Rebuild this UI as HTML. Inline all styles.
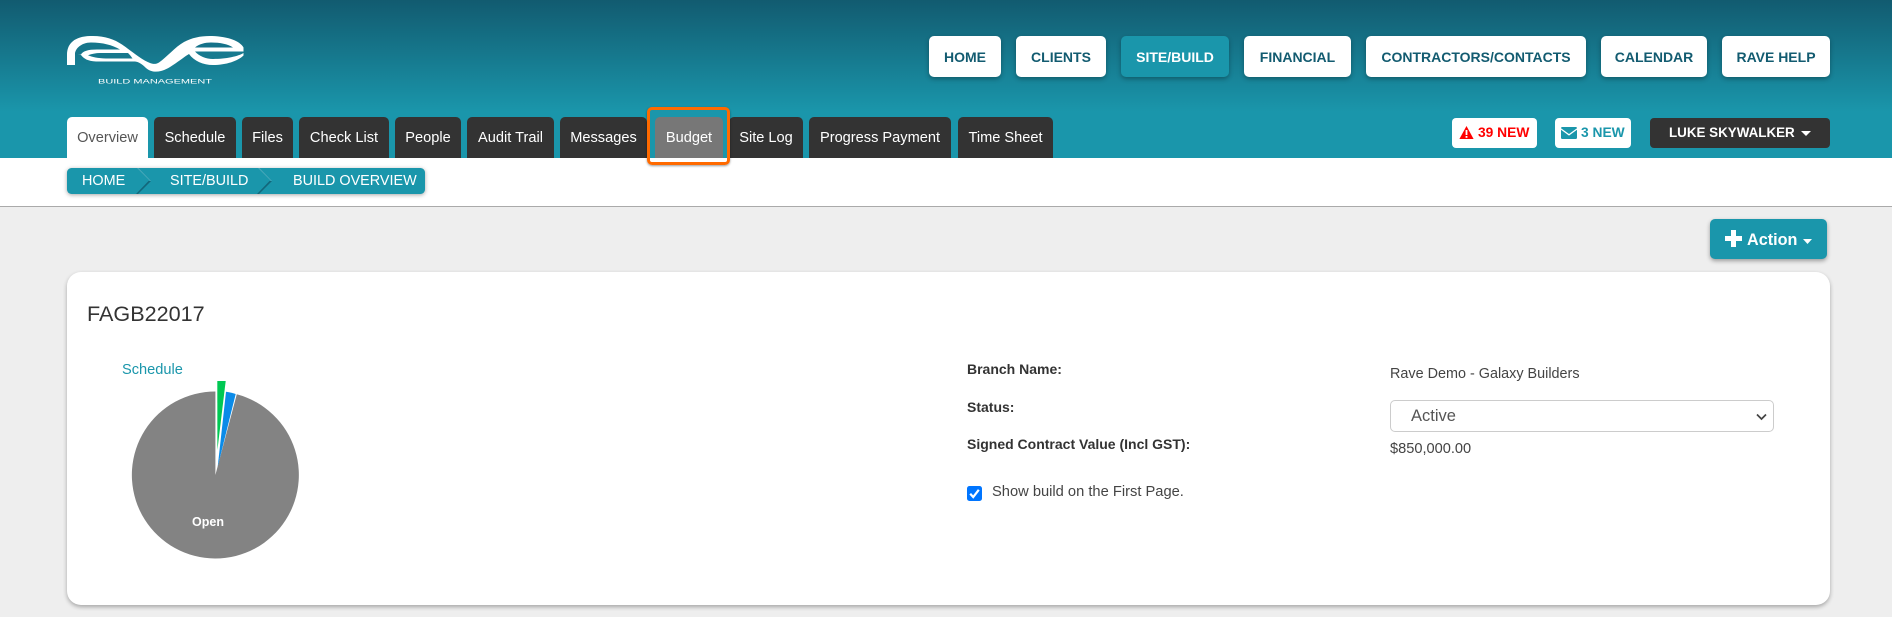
<!DOCTYPE html>
<html><head><meta charset="utf-8"><title>Build Overview</title>
<style>
html,body{margin:0;padding:0}
body{width:1892px;height:617px;position:relative;overflow:hidden;background:#eee;font-family:"Liberation Sans",sans-serif;color:#333}
div,span{box-sizing:border-box}
.a{position:absolute}
.c{position:absolute;display:flex;align-items:center;justify-content:center;white-space:nowrap}
#hd{left:0;top:0;width:1892px;height:158px;background:linear-gradient(#125b70 0,#1a96ab 112px,#1a96ab 158px)}
#wh{left:0;top:158px;width:1892px;height:48px;background:#fff}
#ln{left:0;top:206px;width:1892px;height:1px;background:#aaa}
.n{top:36px;height:41px;background:#fff;border-radius:5px;color:#125b70;font-weight:bold;font-size:14px;box-shadow:0 2px 5px rgba(0,0,0,.3)}
.t{top:117px;height:41px;background:#333;color:#fff;font-size:14.6px;border-radius:5px 5px 0 0}
.l{left:967px;font-size:14px;font-weight:bold;color:#333;white-space:nowrap}
.v{left:1390px;font-size:14.4px;color:#444;white-space:nowrap}
</style></head><body>
<div class="a" id="hd"></div>
<div class="a" id="wh"></div>
<div class="a" id="ln"></div>

<svg class="a" style="left:0;top:0" width="300" height="100" viewBox="0 0 300 100">
<path fill="#fff" d="M67 65L67 55C67 43 75 36.5 90 36C104 35.5 114 39 122 44.5C130 50 142 60 150 63C153 64.3 156 64.3 159 62.5C167 57 175 47 184 42C192 37.5 202 35.7 212 36C228 36.5 240 41 243.5 47.5L243.5 55.5C238 61 226 65 213 65C203 65 194 61 189 54C182 58 170 69 161 71C155 72.5 150 71.5 146 68C142 64 139 62 135 61.5L96 61.5C88 61 84 59 81 55L75 53L75 65Z"/>
<path fill="#16768b" d="M75 54C75 49 81 42.5 91 42.5C103 42.5 112 45 120 49.5L97 49.5C88 49.5 83 51 81 54.5Z"/>
<path fill="#17788d" d="M88 55.2C92 53.8 96 53 100 53L128 53C130 54.8 131 56.5 132.5 58.5L106 58.5C98 58.2 92 57 88 55.2Z"/>
<path fill="#15728a" d="M195 47.5C199 44 205 42.5 211 42.5C220 42.5 228 44 233 47.5Z"/>
<path fill="#177a8f" d="M195 51.5L244 51.5L244 52.8C238 56.5 226 59 213 59C206 59 199 56 195 51.5Z"/>
<text x="98" y="83.6" fill="#fff" font-family="Liberation Sans" font-size="6.6" textLength="114" lengthAdjust="spacingAndGlyphs">BUILD MANAGEMENT</text>
</svg>

<div class="c n" style="left:929px;width:72px">HOME</div>
<div class="c n" style="left:1016px;width:90px">CLIENTS</div>
<div class="c n" style="left:1121px;width:108px;background:#1a96ab;color:#fff">SITE/BUILD</div>
<div class="c n" style="left:1244px;width:107px">FINANCIAL</div>
<div class="c n" style="left:1366px;width:220px">CONTRACTORS/CONTACTS</div>
<div class="c n" style="left:1601px;width:106px">CALENDAR</div>
<div class="c n" style="left:1722px;width:108px">RAVE HELP</div>

<div class="c t" style="left:67px;width:81px;background:#fff;color:#555">Overview</div>
<div class="c t" style="left:154px;width:82px">Schedule</div>
<div class="c t" style="left:242px;width:51px">Files</div>
<div class="c t" style="left:299px;width:90px">Check List</div>
<div class="c t" style="left:395px;width:66px">People</div>
<div class="c t" style="left:467px;width:87px">Audit Trail</div>
<div class="c t" style="left:560px;width:87px">Messages</div>
<div class="c t" style="left:655px;width:68px;background:#777">Budget</div>
<div class="c t" style="left:729px;width:74px">Site Log</div>
<div class="c t" style="left:809px;width:142px">Progress Payment</div>
<div class="c t" style="left:958px;width:95px">Time Sheet</div>
<div class="a" style="left:647px;top:107px;width:83px;height:58px;border:3.5px solid #ff6a00;border-radius:5px;box-shadow:0 1px 2px rgba(0,0,0,.4)"></div>

<div class="a" style="left:1452px;top:118px;width:85px;height:30px;background:#fff;border-radius:4px"></div>
<svg class="a" style="left:1459px;top:125px" width="15" height="15" viewBox="0 0 15 15"><path fill="#f00" d="M7.5 1L14.6 14H.4Z"/><rect x="6.6" y="5" width="1.8" height="5" fill="#fff"/><rect x="6.6" y="11" width="1.8" height="1.8" fill="#fff"/></svg>
<div class="a" style="left:1478px;top:125px;font-size:13.8px;font-weight:bold;color:#f00;line-height:16px">39 NEW</div>
<div class="a" style="left:1555px;top:118px;width:76px;height:30px;background:#fff;border-radius:4px"></div>
<svg class="a" style="left:1561px;top:127px" width="16" height="12" viewBox="0 0 16 12"><path fill="#1a96ab" d="M1.2 0H14.8C15.5 0 16 .5 16 1.2L8 7 0 1.2C0 .5.5 0 1.2 0ZM0 2.8L8 8.6 16 2.8V10.8C16 11.5 15.5 12 14.8 12H1.2C.5 12 0 11.5 0 10.8Z"/></svg>
<div class="a" style="left:1581px;top:125px;font-size:13.8px;font-weight:bold;color:#1a96ab;line-height:16px">3 NEW</div>
<div class="a" style="left:1650px;top:118px;width:180px;height:30px;background:#333;border-radius:4px"></div>
<div class="a" style="left:1669px;top:125px;font-size:13.4px;font-weight:bold;color:#fff;line-height:16px;white-space:nowrap">LUKE SKYWALKER</div>
<svg class="a" style="left:1801px;top:131px" width="10" height="5"><path fill="#fff" d="M0 0H10L5 5Z"/></svg>

<svg class="a" style="left:67px;top:168px;filter:drop-shadow(0 1px 2px rgba(0,0,0,.35))" width="358" height="26" viewBox="0 0 358 26"><rect width="358" height="26" rx="4.5" fill="#1a96ab"/>
<path fill="#4aa8ba" d="M70 0H71.5L84 13H83Z"/><path fill="#13677b" d="M84 13L71 26H69L81.5 13Z"/>
<path fill="#4aa8ba" d="M191 0H192.5L205 13H204Z"/><path fill="#13677b" d="M205 13L192 26H190L202.5 13Z"/></svg>
<div class="a" style="left:82px;top:173px;font-size:14.4px;color:#fff;line-height:16px">HOME</div>
<div class="a" style="left:170px;top:173px;font-size:14.4px;color:#fff;line-height:16px">SITE/BUILD</div>
<div class="a" style="left:293px;top:173px;font-size:14.4px;color:#fff;line-height:16px;white-space:nowrap">BUILD OVERVIEW</div>

<div class="a" style="left:1710px;top:219px;width:117px;height:40px;background:#1a96ab;border-radius:5px;box-shadow:0 2px 4px rgba(0,0,0,.35)"></div>
<svg class="a" style="left:1725px;top:230px" width="17" height="17"><path fill="#fff" d="M6 0H11V6H17V11H11V17H6V11H0V6H6Z"/></svg>
<div class="a" style="left:1747px;top:231px;font-size:16.2px;font-weight:bold;color:#fff;line-height:19px">Action</div>
<svg class="a" style="left:1803px;top:239px" width="9" height="5"><path fill="#fff" d="M0 0H9L4.5 5Z"/></svg>

<div class="a" style="left:67px;top:272px;width:1763px;height:333px;background:#fff;border-radius:14px;box-shadow:0 2px 4px rgba(0,0,0,.3)"></div>
<div class="a" style="left:87px;top:300px;font-size:21.6px;color:#333;line-height:27px">FAGB22017</div>
<div class="a" style="left:122px;top:361px;font-size:14.6px;color:#1a96ab;line-height:18px">Schedule</div>

<svg class="a" style="left:120px;top:370px" width="190" height="200" viewBox="120 370 190 200">
<path fill="#838383" d="M215.4 475L236.8 394.3A83.5 83.5 0 1 1 215.4 391.5Z"/>
<path fill="#00c853" d="M217.3 381H225.7L217.4 450Z"/>
<path fill="#0a8be8" d="M226 391.7C229 392 232.5 393 235.7 394L217.7 466.7Z"/>
<text x="208" y="526" fill="#fff" font-family="Liberation Sans" font-size="12.5" font-weight="bold" text-anchor="middle">Open</text>
</svg>

<div class="a l" style="top:361px;line-height:16px">Branch Name:</div>
<div class="a l" style="top:399px;line-height:16px">Status:</div>
<div class="a l" style="top:436px;line-height:16px">Signed Contract Value (Incl GST):</div>
<div class="a v" style="top:366px;line-height:16px">Rave Demo - Galaxy Builders</div>
<div class="a" style="left:1390px;top:400px;width:384px;height:32px;border:1px solid #ccc;border-radius:5px;background:#fff"></div>
<div class="a" style="left:1411px;top:406px;font-size:16.5px;color:#555;line-height:20px">Active</div>
<svg class="a" style="left:1756px;top:413px" width="11" height="8"><path fill="none" stroke="#444" stroke-width="1.7" d="M1 1.5L5.5 6L10 1.5"/></svg>
<div class="a v" style="top:441px;line-height:16px;font-size:14.6px">$850,000.00</div>
<svg class="a" style="left:967px;top:486px" width="15" height="15"><rect width="15" height="15" rx="2.5" fill="#0075ff"/><path fill="none" stroke="#fff" stroke-width="2.2" d="M3.2 7.8L6.2 11L11.8 3.8"/></svg>
<div class="a v" style="left:992px;top:484px;line-height:16px;font-size:14.7px">Show build on the First Page.</div>
</body></html>
